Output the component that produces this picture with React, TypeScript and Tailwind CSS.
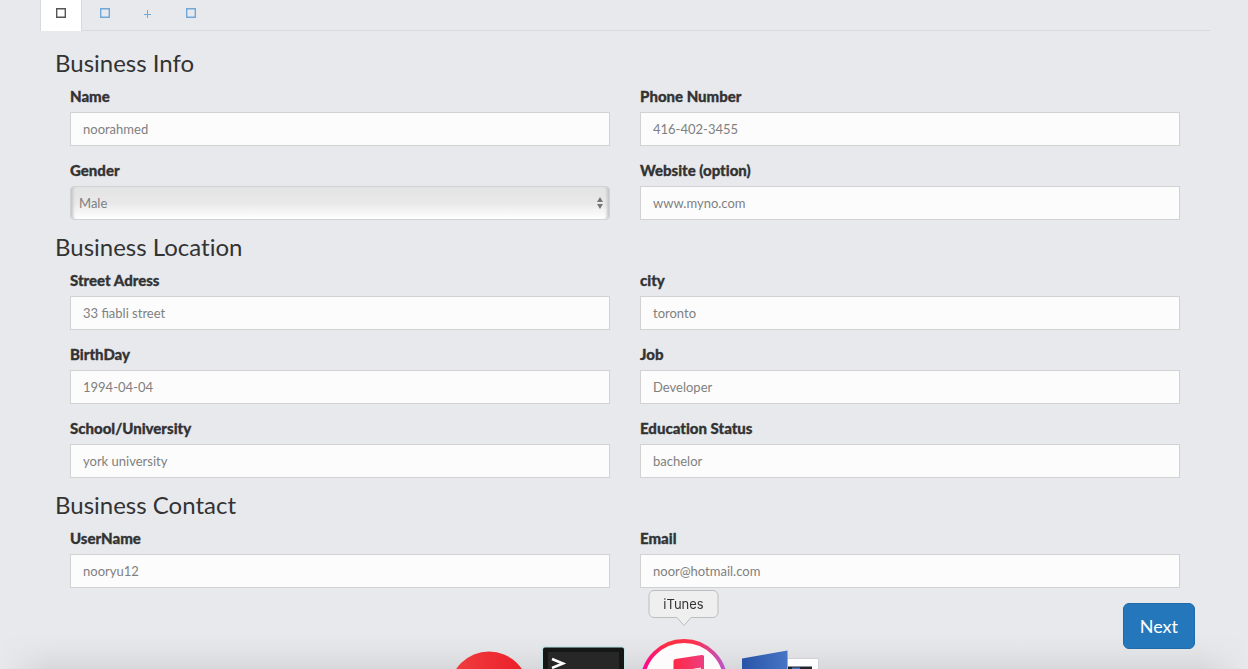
import { useId } from "react";

type FieldProps = { label: string; value: string };

const labelStyle = "mb-[7px] block text-[15px] leading-[18px] font-black text-[#333] [-webkit-text-stroke:0.3px_#333] [font-variant-ligatures:none]";

function Field({ label, value }: FieldProps) {
  const id = useId();
  return (
    <div>
      <label htmlFor={id} className={labelStyle}>
        {label}
      </label>
      <input
        id={id}
        type="text"
        placeholder={value}
        className="block h-[34px] w-full border border-[#d2d2d2] bg-[#fcfcfc] px-3 text-[13px] text-[#777] outline-none placeholder:text-[#808080]"
      />
    </div>
  );
}

function GenderSelect() {
  const id = useId();
  return (
    <div>
      <label htmlFor={id} className={labelStyle}>
        Gender
      </label>
      <div className="relative">
        <select
          id={id}
          className="block h-[34px] w-full appearance-none rounded border border-[#d0d2d5] bg-linear-to-b from-[#e3e3e3] via-[#e9e9e9] to-[#ffffff] px-2 pt-0.5 text-[13px] text-[#808080] shadow-[inset_5px_0_3px_-3px_#c4c4c4,inset_-5px_0_3px_-3px_#c4c4c4] outline-none"
        >
          <option>Male</option>
          <option>Female</option>
        </select>
        <svg className="pointer-events-none absolute top-[11px] right-[7px]" width="6" height="12" viewBox="0 0 6 12" fill="#777" aria-hidden="true">
          <path d="M3 0 6 5H0ZM0 7h6L3 12Z" />
        </svg>
      </div>
    </div>
  );
}

function Heading({ children }: { children: string }) {
  return <h2 className="mb-3 text-2xl leading-6 text-[#333] [font-variant-ligatures:none]">{children}</h2>;
}

const grid = "mb-[15px] grid grid-cols-2 gap-x-[30px] gap-y-[15px] px-[15px]";

function BoxIcon() {
  return (
    <svg width="10" height="10" viewBox="0 0 10 10" fill="none" stroke="currentColor" aria-hidden="true">
      <path d="M.7.7h8.6v8.6H.7z" strokeWidth="1.4" />
    </svg>
  );
}

function PlusIcon() {
  return (
    <svg width="9" height="9" viewBox="0 0 9 9" fill="none" stroke="currentColor" aria-hidden="true">
      <path d="M4.5 1v8M1 5.5h7" />
    </svg>
  );
}

function Tabs() {
  const tab = "flex h-[30px] w-[43px] justify-center pt-2 text-[#70a8d8]";
  return (
    <nav className="flex h-[31px] border-b border-[#d9dadc]">
      <button type="button" aria-label="Business" className="mr-px flex h-[31px] w-[42px] justify-center border-x border-[#d9dadc] bg-white pt-2 text-[#555]">
        <BoxIcon />
      </button>
      <button type="button" aria-label="Details" className={tab}>
        <BoxIcon />
      </button>
      <button type="button" aria-label="Add" className="flex h-[30px] w-[43px] justify-center pt-[9px] text-[#70a8d8]">
        <PlusIcon />
      </button>
      <button type="button" aria-label="Finish" className={tab}>
        <BoxIcon />
      </button>
    </nav>
  );
}

function Dock() {
  return (
    <div className="pointer-events-none fixed inset-x-0 bottom-0 h-20 overflow-hidden">
      <div className="absolute inset-x-0 bottom-0 h-[34px] bg-linear-to-b from-transparent via-[#d9dadb]/40 to-[#d7d8db] mask-l-from-96% mask-r-from-96%" />
      <svg className="absolute bottom-0 left-[448px]" width="380" height="32" viewBox="448 637 380 32" aria-hidden="true">
        <defs>
          <linearGradient id="red" x1="0" x2="1">
            <stop offset="0" stopColor="#f04040" />
            <stop offset="1" stopColor="#eb1c28" />
          </linearGradient>
          <linearGradient id="ring" x1="0" y1="0.3" x2="1" y2="0.3">
            <stop offset="0" stopColor="#ff0795" />
            <stop offset="0.3" stopColor="#ff303c" />
            <stop offset="0.65" stopColor="#fb3154" />
            <stop offset="1" stopColor="#b657ce" />
          </linearGradient>
          <linearGradient id="note" x1="0" x2="1">
            <stop offset="0" stopColor="#ff2844" />
            <stop offset="1" stopColor="#ed3e80" />
          </linearGradient>
          <linearGradient id="word" x1="0" x2="1">
            <stop offset="0" stopColor="#2855a8" />
            <stop offset="1" stopColor="#4774c4" />
          </linearGradient>
        </defs>
        <circle cx="489" cy="691" r="39.5" fill="url(#red)" />
        <rect x="541.5" y="646" width="83.5" height="40" rx="3" fill="#c5e4e7" />
        <rect x="543" y="647.5" width="81" height="40" rx="2" fill="#151616" />
        <rect x="548" y="652" width="71" height="30" fill="#272727" />
        <path d="m552 659 11 4.5-11 4.5" fill="none" stroke="#fff" strokeWidth="2.5" />
        <circle cx="684" cy="682.5" r="41.5" fill="#fdfbfc" stroke="url(#ring)" strokeWidth="4" />
        <path d="M673.5 661q0-1.5 2-2l26-4q2.5-.4 2.5 1.5V690h-4v-22l-22 4v18h-4.5Z" fill="url(#note)" />
        <path d="M678 669h22v8h-22z" fill="#ef3865" />
        <path d="m692 669 9-1.4V669Z" fill="#fbdde7" />
        <path d="M787 658.5h31.5V675H787z" fill="#fff" stroke="#d0d1d3" />
        <path d="M788 666.5h24V675h-24z" fill="#20242e" />
        <path d="M792 667.5h8V675h-8z" fill="#4773c0" />
        <path d="m742 658.5 45.5-8V675H742Z" fill="url(#word)" />
      </svg>
      <div className="absolute bottom-[42px] left-[648px] w-[71px]">
        <svg className="block" width="71" height="37" viewBox="0 0 71 37" aria-hidden="true">
          <path d="M6 .5h59a5 5 0 0 1 5 5v17a5 5 0 0 1-5 5H43l-7 8-7-8H6a5 5 0 0 1-5-5v-17a5 5 0 0 1 5-5Z" fill="#efefef" stroke="#bcbdbf" />
        </svg>
        <span className="absolute inset-x-0 top-0 text-center font-[Inter,sans-serif] text-[13px] leading-[29px] text-[#333]">iTunes</span>
      </div>
    </div>
  );
}

export default function App() {
  return (
    <main className="min-h-screen bg-[#e8e9ed] pr-[38px] pl-10 font-[Lato,sans-serif]">
      <Tabs />
      <form className="px-[15px] pt-5">
        <Heading>Business Info</Heading>
        <div className={grid}>
          <Field label="Name" value="noorahmed" />
          <Field label="Phone Number" value="416-402-3455" />
          <GenderSelect />
          <Field label="Website (option)" value="www.myno.com" />
        </div>
        <Heading>Business Location</Heading>
        <div className={grid}>
          <Field label="Street Adress" value="33 fiabli street" />
          <Field label="city" value="toronto" />
          <Field label="BirthDay" value="1994-04-04" />
          <Field label="Job" value="Developer" />
          <Field label="School/University" value="york university" />
          <Field label="Education Status" value="bachelor" />
        </div>
        <Heading>Business Contact</Heading>
        <div className={grid}>
          <Field label="UserName" value="nooryu12" />
          <Field label="Email" value="noor@hotmail.com" />
        </div>
        <div className="flex justify-end">
          <button type="button" className="z-10 h-[46px] rounded-md border border-[#206ba8] bg-[#2477bb] px-4 text-lg text-white">
            Next
          </button>
        </div>
      </form>
      <Dock />
    </main>
  );
}
